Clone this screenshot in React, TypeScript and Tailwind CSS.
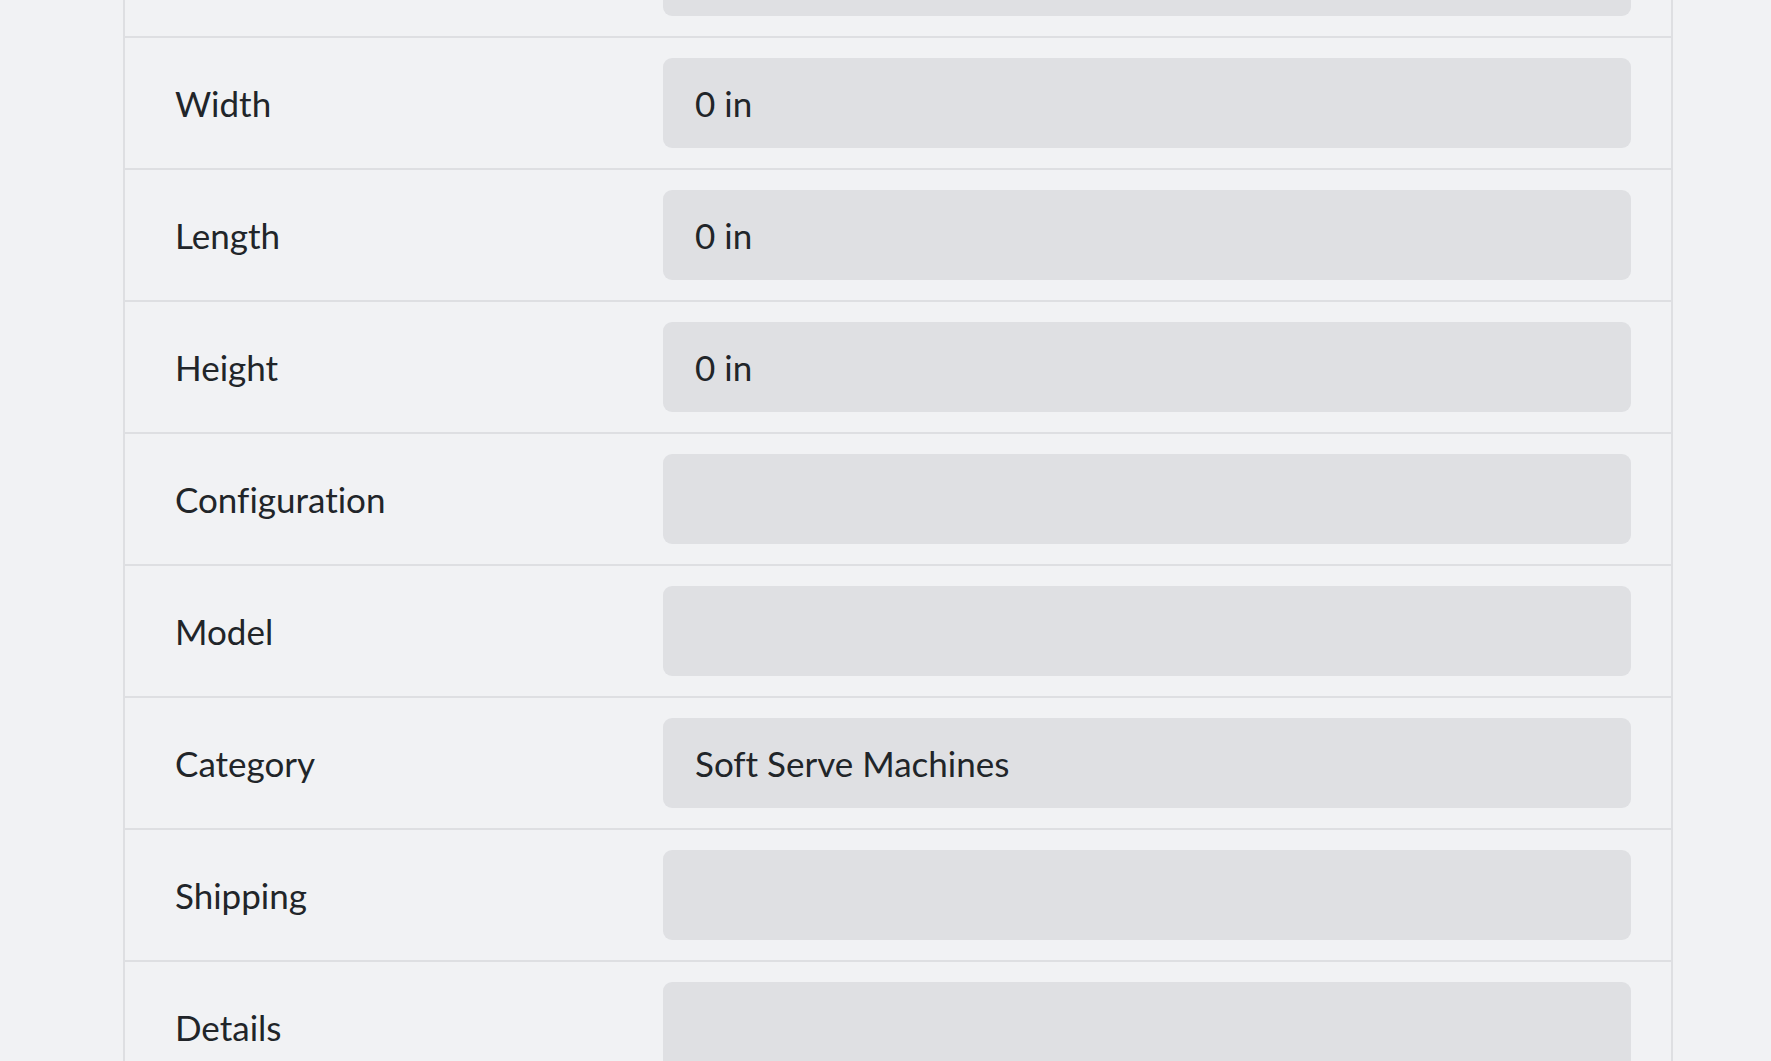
import React from "react";

const rows: { label: string; value: string }[] = [
  { label: "Weight", value: "" },
  { label: "Width", value: "0 in" },
  { label: "Length", value: "0 in" },
  { label: "Height", value: "0 in" },
  { label: "Configuration", value: "" },
  { label: "Model", value: "" },
  { label: "Category", value: "Soft Serve Machines" },
  { label: "Shipping", value: "" },
  { label: "Details", value: "" },
];

export default function App() {
  return (
    <div
      className="h-[1061px] w-full overflow-hidden bg-[#f1f2f4] text-[#212529] [font-variant-ligatures:none]"
      style={{ fontFamily: "Lato, 'Open Sans', sans-serif" }}
    >
      <div className="ml-[123px] -mt-[94px] w-[1550px] border-x-2 border-[#dedfe2]">
        {rows.map((r, i) => (
          <div
            key={i}
            className="flex h-[132px] items-center border-b-2 border-[#dedfe2]"
          >
            <div className="w-[538px] shrink-0 pl-[50px] text-[35px] leading-none">
              {i === 0 ? "" : r.label}
            </div>
            <div className="mr-[40px] flex h-[90px] flex-1 items-center rounded-[9px] bg-[#dfe0e3] px-[32px] text-[35px] leading-none">
              {r.value}
            </div>
          </div>
        ))}
      </div>
    </div>
  );
}
